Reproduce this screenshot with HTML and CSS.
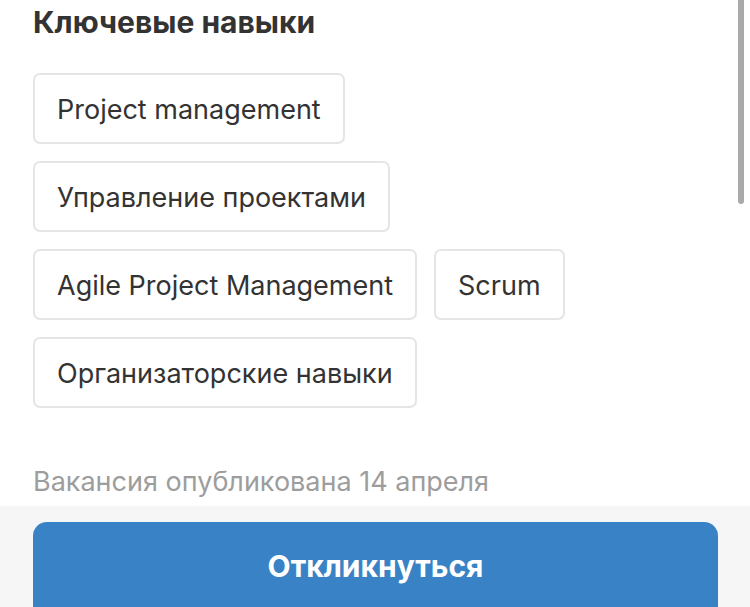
FILE: index.html
```html
<!DOCTYPE html>
<html lang="ru">
<head>
<meta charset="utf-8">
<link rel="stylesheet" href="styles.css">
</head>
<body>
<div class="page">
  <main class="content">
    <h2 class="title">Ключевые навыки</h2>
    <ul class="tags">
      <li class="tag">Project management</li>
      <li class="tag">Управление проектами</li>
      <li class="tag">Agile Project Management</li>
      <li class="tag">Scrum</li>
      <li class="tag">Организаторские навыки</li>
    </ul>
    <p class="published">Вакансия опубликована 14 апреля</p>
  </main>
  <footer class="footer">
    <button class="apply">Откликнуться</button>
  </footer>
  <div class="scrollbar"></div>
</div>
</body>
</html>
```

FILE: styles.css
```css
* { box-sizing: border-box; }
html, body {
  margin: 0;
  padding: 0;
  background: #fff;
}
.page {
  position: relative;
  width: 750px;
  height: 607px;
  overflow: hidden;
  font-family: Inter, "Noto Sans", sans-serif;
  color: #333;
}
.content {
  padding: 0 33px;
}
.title {
  margin: 0;
  padding-top: 2px;
  font-size: 30px;
  line-height: 40px;
  font-weight: 700;
  color: #333;
}
.tags {
  list-style: none;
  margin: 31px 0 0;
  padding: 0;
  display: flex;
  flex-wrap: wrap;
  gap: 17px;
  width: 600px;
}
.tag {
  height: 71px;
  display: flex;
  align-items: center;
  padding: 2px 22px 0;
  border: 2px solid #e5e5e5;
  border-radius: 7px;
  font-size: 27px;
  color: #333;
  white-space: nowrap;
}
.published {
  margin: 57px 0 0;
  font-size: 27px;
  line-height: 34px;
  color: #9d9d9d;
  font-weight: 400;
}
.footer {
  position: absolute;
  left: 0;
  right: 0;
  top: 506px;
  bottom: 0;
  background: #f6f6f6;
  padding: 16px 32px 0 33px;
}
.apply {
  display: block;
  width: 685px;
  height: 100px;
  border: 0;
  border-radius: 14px;
  background: #3a82c6;
  color: #fff;
  font-family: inherit;
  font-size: 30px;
  font-weight: 700;
  padding: 0 0 12px;
}
.scrollbar {
  position: absolute;
  top: 0;
  left: 738px;
  width: 6px;
  height: 204px;
  background: #aaaaaa;
  border-radius: 0 0 3px 3px;
}
```
